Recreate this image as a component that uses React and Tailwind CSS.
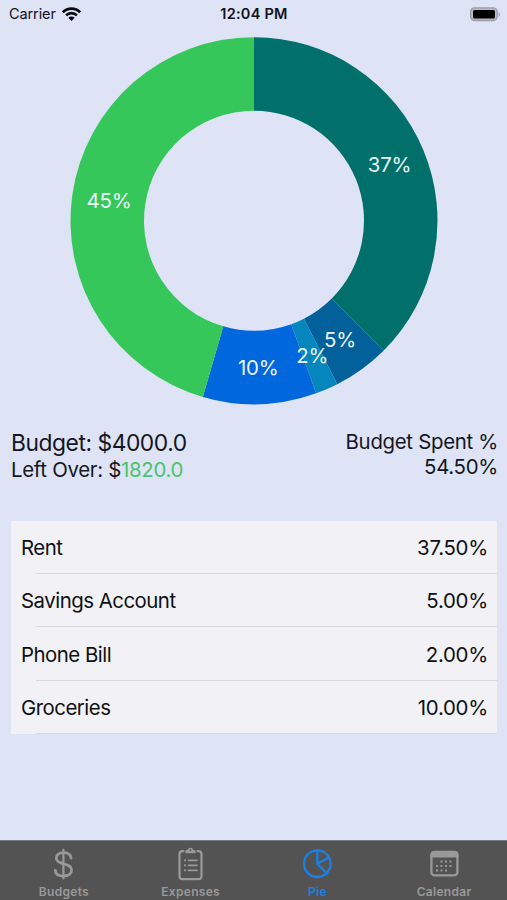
const SLICES = [
  { value: 37.5, color: '#02706a', label: '37%', x: 389.5, y: 165 },
  { value: 5, color: '#02609b', label: '5%', x: 340, y: 340 },
  { value: 2, color: '#0586bd', label: '2%', x: 312.3, y: 356 },
  { value: 10, color: '#0167dc', label: '10%', x: 258.3, y: 368 },
  { value: 45.5, color: '#35c759', label: '45%', x: 109, y: 201 },
];

const EXPENSES = [
  ['Rent', '37.50%'],
  ['Savings Account', '5.00%'],
  ['Phone Bill', '2.00%'],
  ['Groceries', '10.00%'],
];

const CX = 254;
const CY = 220.7;
const OUTER = 183.5;
const INNER = 110;

function point(r, pct) {
  const a = (pct / 100) * 2 * Math.PI;
  return `${(CX + r * Math.sin(a)).toFixed(2)} ${(CY - r * Math.cos(a)).toFixed(2)}`;
}

function ring(start, end) {
  return `M${point(OUTER, start)} A${OUTER} ${OUTER} 0 0 1 ${point(OUTER, end)} L${point(INNER, end)} A${INNER} ${INNER} 0 0 0 ${point(INNER, start)} Z`;
}

function Donut() {
  let total = 0;
  const parts = SLICES.map((s) => {
    const start = total;
    total += s.value;
    return { ...s, d: ring(start, total) };
  });
  return (
    <svg className="block h-[392px] w-full shrink-0" viewBox="0 28 507 392">
      {parts.map((s) => (
        <path key={s.label} d={s.d} fill={s.color} />
      ))}
      {parts.map((s) => (
        <text key={s.label} x={s.x} y={s.y + 7.3} textAnchor="middle" className="fill-[#eaf6f8] text-[20.4px] tracking-[-0.25px]">
          {s.label}
        </text>
      ))}
    </svg>
  );
}

function StatusBar() {
  return (
    <div className="grid h-7 shrink-0 grid-cols-3 items-center pl-[9px] pr-[6px] text-[14.5px] leading-7 text-[#10121c]">
      <div className="flex items-center gap-[6px]">
        <span className="tracking-[-0.1px]">Carrier</span>
        <svg className="h-[15px] w-[19px]" viewBox="0 0 19 15" fill="none" stroke="#05060c" strokeWidth="2.7">
          <path d="M.9 5.300a12 12 0 0 1 17.200 0" />
          <path d="M4.100 8.400a7.600 7.600 0 0 1 10.800 0" />
          <path d="M9.5 14 6.300 10.800a4.500 4.500 0 0 1 6.400 0Z" fill="#05060c" stroke="none" />
        </svg>
      </div>
      <div className="pr-[2px] text-center font-semibold tracking-[0.25px]">12:04 PM</div>
      <svg className="h-[15px] w-[32px] justify-self-end" viewBox="0 0 32 15">
        <rect x="1.600" y="0.900" width="26.600" height="12.600" rx="4" fill="#b9bcc8" stroke="#9a9ca5" strokeWidth="1.300" />
        <rect x="4" y="2.900" width="22" height="8.600" rx="1.600" fill="#000" />
        <path d="M29.700 4.700v5q1.300-1 1.300-2.500t-1.300-2.500Z" fill="#9a9ca5" />
      </svg>
    </div>
  );
}

function DollarIcon() {
  return (
    <svg className="h-8 w-8" viewBox="0 0 32 32" fill="none" stroke="currentColor" strokeWidth="2.800" strokeLinecap="round">
      <path d="M16.400 1.800v28.600" strokeWidth="2.200" />
      <path d="M24.100 10c-.4-3.300-3.400-5.400-7.500-5.400-4.300 0-7.300 2.200-7.300 5.500 0 3.100 2.100 4.700 7.200 5.700 5.800 1.200 8.100 2.900 8.100 6.200 0 3.700-3.200 6-8.100 6-4.700 0-7.900-2.200-8.200-5.700" />
    </svg>
  );
}

function ClipboardIcon() {
  return (
    <svg className="h-[34px] w-8" viewBox="0 0 32 34" fill="none" stroke="currentColor" strokeWidth="2.200" strokeLinecap="round">
      <path d="M9.500 4.200H8.500A3 3 0 0 0 5.500 7.200V29.200a3 3 0 0 0 3 3h16a3 3 0 0 0 3-3V7.200a3 3 0 0 0-3-3h-1" />
      <path d="M11.500 6.200V4q0-1 1-1h1.200a2.900 2.900 0 0 1 5.600 0h1.200q1 0 1 1v2.200Z" fill="currentColor" stroke="none" />
      <circle cx="16.500" cy="3.100" r=".9" fill="#535353" stroke="none" />
      <path d="M14.500 13.300h8.500M14.500 18.300h8.500M14.500 23.300h8.500" strokeWidth="1.700" />
      <path d="M11 13.300h.1M11 18.300h.1M11 23.300h.1" />
    </svg>
  );
}

function PieIcon() {
  return (
    <svg className="h-8 w-8" viewBox="0 0 32 32" fill="none" stroke="currentColor" strokeWidth="2.300" strokeLinecap="round" strokeLinejoin="round">
      <circle cx="16.300" cy="15.700" r="13.300" />
      <path d="M16.300 2.400v13.300l9.500 9.500M16.300 15.700l11.500-6.200" />
    </svg>
  );
}

function CalendarIcon() {
  return (
    <svg className="h-8 w-8" viewBox="0 0 32 32">
      <rect x="3.400" y="4" width="26" height="23.400" rx="3.200" fill="none" stroke="currentColor" strokeWidth="2.300" />
      <path d="M2.300 9.500V7a4 4 0 0 1 4-4h20.200a4 4 0 0 1 4 4v2.500Z" fill="currentColor" />
      <g fill="currentColor">
        <path d="M12.500 12.500h2v2h-2zM17 12.500h2v2h-2zM21.500 12.500h2v2h-2zM8 17h2v2H8zM12.500 17h2v2h-2zM17 17h2v2h-2zM21.500 17h2v2h-2zM8 21.500h2v2H8zM12.500 21.500h2v2h-2zM17 21.500h2v2h-2z" />
      </g>
    </svg>
  );
}

const TABS = [
  ['Budgets', DollarIcon],
  ['Expenses', ClipboardIcon],
  ['Pie', PieIcon],
  ['Calendar', CalendarIcon],
];

export default function App() {
  return (
    <div className="flex h-[900px] w-[507px] flex-col overflow-hidden bg-[#dee3f5] font-['Inter','Liberation_Sans',sans-serif]">
      <StatusBar />
      <Donut />
      <div className="flex h-[100.5px] shrink-0 justify-between pl-[11px] pr-[9px] pt-[9px] text-[20.4px] text-[#14161f]">
        <div>
          <div className="text-[22.8px] leading-[28px] tracking-[-0.45px]">Budget: $4000.0</div>
          <div className="leading-[25px] tracking-[-0.3px]">
            Left Over: $<span className="text-[#4bc56f]">1820.0</span>
          </div>
        </div>
        <div className="text-right leading-[25px] tracking-[-0.3px]">
          <div>Budget Spent %</div>
          <div>54.50%</div>
        </div>
      </div>
      <div className="ml-[11px] mr-[10px] shrink-0 bg-[#f1f1f6] text-[20.4px] text-[#101012]">
        {EXPENSES.map(([name, pct]) => (
          <div key={name} className="flex h-[53.4px] flex-col">
            <div className="flex flex-1 items-center justify-between pl-[10px] pr-[9px] pt-[3px]">
              <span className="tracking-[-0.5px]">{name}</span>
              <span className="tracking-[-0.25px]">{pct}</span>
            </div>
            <div className="ml-[25px] h-[1px] shrink-0 bg-[#d9d9df]" />
          </div>
        ))}
      </div>
      <div className="mt-auto grid h-[60px] shrink-0 grid-cols-4 border-t border-[#777a80] bg-[#535353] text-[#999999]">
        {TABS.map(([name, Icon]) => (
          <div key={name} className={name === 'Pie' ? 'flex flex-col items-center text-[#1b80e6]' : 'flex flex-col items-center'}>
            <div className="flex h-[43px] items-center pt-[2px]">
              <Icon />
            </div>
            <div className="pl-[1px] text-[12px] font-semibold leading-[15px] tracking-[0.3px]">{name}</div>
          </div>
        ))}
      </div>
    </div>
  );
}
